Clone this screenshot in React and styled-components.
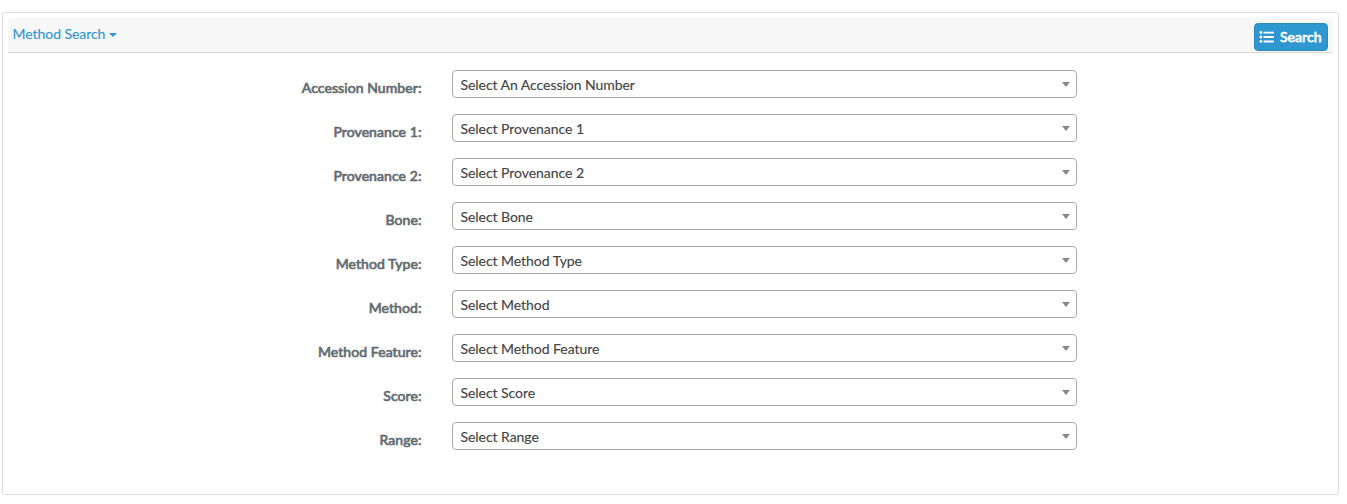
import React from 'react';
import styled, { createGlobalStyle } from 'styled-components';

const GlobalStyle = createGlobalStyle`
  * { box-sizing: border-box; }
  body {
    margin: 0;
    background: #fff;
    font-family: Lato, "Liberation Sans", sans-serif;
    font-size: 14px;
    line-height: 20px;
  }
`;

const Panel = styled.section`
  width: 1337px;
  height: 483px;
  margin: 12px 0 0 2px;
  padding: 5px;
  border: 1px solid #ddd;
  border-radius: 2px;
`;

const Header = styled.header`
  display: flex;
  justify-content: space-between;
  align-items: flex-start;
  height: 35px;
  padding: 5px 5px 0 4.5px;
  background: #f7f7f7;
  border-bottom: 1px solid #d8d8d8;
  border-radius: 2px 2px 0 0;
`;

const MenuLink = styled.a`
  display: flex;
  align-items: center;
  gap: 4px;
  height: 22px;
  color: #2e97cf;
  letter-spacing: -0.05px;
  -webkit-text-stroke: 0.15px currentColor;
  white-space: nowrap;
`;

const Caret = styled.span`
  width: 0;
  height: 0;
  margin-top: 1px;
  border: solid transparent;
  border-width: 4px 4px 0;
  border-top-color: currentColor;
`;

const SearchButton = styled.button`
  display: flex;
  align-items: center;
  gap: 6px;
  width: 74px;
  height: 28px;
  padding: 0 0 0 4px;
  border: 1px solid #258bc2;
  border-radius: 4px;
  background: #2e97cf;
  color: #fff;
  font: 400 14px/20px Lato, "Liberation Sans", sans-serif;
  letter-spacing: 0.05px;
  -webkit-text-stroke: 0.75px currentColor;
  white-space: nowrap;
`;

const Form = styled.form`
  display: flex;
  flex-direction: column;
  gap: 16px;
  padding: 17px 256px 0 0;
`;

const Row = styled.div`
  display: grid;
  grid-template-columns: 413.5px 625px;
  column-gap: 30.5px;
  height: 28px;
`;

const Label = styled.label`
  padding-top: 8px;
  color: #626c70;
  letter-spacing: 0.08px;
  -webkit-text-stroke: 0.7px currentColor;
  text-align: right;
  white-space: nowrap;
`;

const Select = styled.div`
  display: flex;
  align-items: center;
  justify-content: space-between;
  height: 28px;
  padding: 2px 6px 0 7.5px;
  border: 1px solid #aaa;
  border-radius: 4px;
  background: #fff;
  color: #444;
  letter-spacing: -0.05px;
  -webkit-text-stroke: 0.15px currentColor;
  white-space: nowrap;
`;

const Arrow = styled.span`
  width: 0;
  height: 0;
  margin-top: -1px;
  border: solid transparent;
  border-width: 5px 4px 0;
  border-top-color: #888;
`;

const fields = [
  ['Accession Number:', 'Select An Accession Number'],
  ['Provenance 1:', 'Select Provenance 1'],
  ['Provenance 2:', 'Select Provenance 2'],
  ['Bone:', 'Select Bone'],
  ['Method Type:', 'Select Method Type'],
  ['Method:', 'Select Method'],
  ['Method Feature:', 'Select Method Feature'],
  ['Score:', 'Select Score'],
  ['Range:', 'Select Range'],
];

const ListIcon = () => (
  <svg width="15" height="12" viewBox="0 0 15 12" fill="currentColor" aria-hidden="true">
    <circle cx="1.9" cy="1.5" r="1.4" />
    <circle cx="1.9" cy="6" r="1.4" />
    <circle cx="1.9" cy="10.5" r="1.4" />
    <path d="M4.5 .7h10.3v1.8H4.5zM4.5 5.1h10.3v1.8H4.5zM4.5 9.6h10.3v1.8H4.5z" />
  </svg>
);

export default function App() {
  return (
    <>
      <GlobalStyle />
      <Panel>
        <Header>
          <MenuLink>Method Search<Caret /></MenuLink>
          <SearchButton type="button"><ListIcon />Search</SearchButton>
        </Header>
        <Form>
          {fields.map(([label, value]) => (
            <Row key={label}>
              <Label>{label}</Label>
              <Select>{value}<Arrow /></Select>
            </Row>
          ))}
        </Form>
      </Panel>
    </>
  );
}
